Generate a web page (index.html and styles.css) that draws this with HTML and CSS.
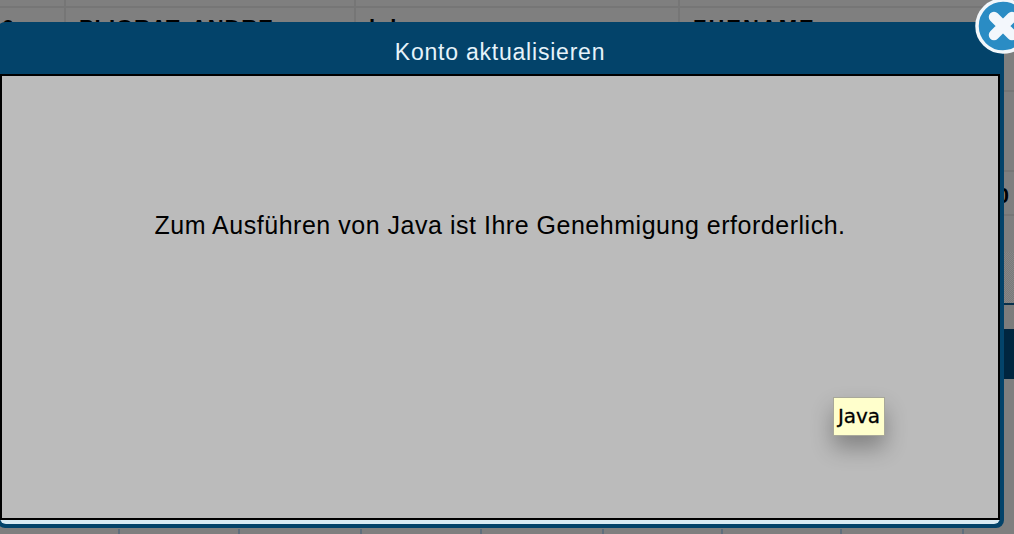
FILE: index.html
```html
<!DOCTYPE html>
<html lang="de">
<head>
<meta charset="utf-8">
<title>Konto aktualisieren</title>
<link rel="stylesheet" href="styles.css">
</head>
<body>
<div class="page">
  <div class="row row-top">
    <div class="cell cell-a"></div><div class="cell cell-b"></div><div class="cell cell-c"></div><div class="cell cell-d"></div>
  </div>
  <div class="row row-head">
    <div class="cell cell-a">0</div><div class="cell cell-b">PLIGRAT, ANDRE</div><div class="cell cell-c">lok</div><div class="cell cell-d">ZHENAME</div>
  </div>
  <div class="row row-plain"></div>
  <div class="row row-num"><span class="digit">0</span></div>
  <div class="row row-gap"></div>
  <div class="row row-band"></div>
  <div class="row row-light"></div>
  <div class="row row-dark"></div>
  <div class="row row-rest"></div>
  <div class="row row-ticks">
    <div class="tick"></div><div class="tick"></div><div class="tick"></div><div class="tick"></div><div class="tick"></div><div class="tick"></div><div class="tick"></div><div class="tick"></div>
  </div>
</div>

<div class="modal">
  <h1 class="modal-title">Konto aktualisieren</h1>
  <div class="modal-frame">
    <div class="applet">
      <p class="applet-msg">Zum Ausführen von Java ist Ihre Genehmigung erforderlich.</p>
      <div class="java-tip">Java</div>
    </div>
  </div>
</div>

<svg class="close" width="56" height="56" viewBox="0 0 56 56" aria-label="Schließen">
  <circle cx="28" cy="28" r="26" fill="#2a8cc4" stroke="#f2f7fb" stroke-width="3.5"/>
  <path d="M19 19 L37 37 M37 19 L19 37" stroke="#f3f7fc" stroke-width="10.5" stroke-linecap="round" fill="none"/>
</svg>
</body>
</html>
```

FILE: styles.css
```css
html, body {
  margin: 0;
  height: 534px;
  overflow: hidden;
  background: #7f7f7f;
}

.page {
  width: 1014px;
  height: 534px;
  display: flex;
  flex-direction: column;
  font-family: "Liberation Sans", Arial, sans-serif;
  color: #000;
}

.row {
  flex: none;
  box-sizing: border-box;
  border-bottom: 2px solid #767676;
}

.row-top, .row-head {
  display: grid;
  grid-template-columns: 66px 290px 324px 1fr;
}

.row-top { height: 8px; }
.row-head { height: 84px; }

.cell {
  box-sizing: border-box;
  border-right: 2px solid #767676;
  padding: 8px 0 0 13px;
  font-size: 22px;
  font-weight: 700;
  letter-spacing: 0.9px;
  line-height: 24px;
  white-space: nowrap;
}

.cell-a { padding-left: 2px; }
.cell-d { border-right: 0; letter-spacing: 2px; }

.row-plain { height: 80px; }

.row-num {
  height: 44px;
  display: flex;
  justify-content: flex-end;
  align-items: flex-start;
  padding-top: 12px;
}

.digit {
  font-size: 22px;
  font-weight: 700;
  line-height: 24px;
  margin-right: 5px;
}

.row-gap { height: 36px; border-bottom: 0; }

.row-band {
  height: 51px;
  border-bottom: 0;
  background: repeating-conic-gradient(#7a7a7a 0 25%, #868686 0 50%) 0 0 / 2px 2px;
}

.row-light {
  height: 26px;
  border-bottom: 0;
  border-top: 2px solid #06304c;
  background: #7c7c7c;
}

.row-dark { height: 50px; border-bottom: 0; background: #00253f; }
.row-rest { height: 150px; border-bottom: 0; }

.row-ticks {
  height: 6px;
  border-bottom: 0;
  display: grid;
  grid-template-columns: 120px 120px 122px 120px 122px 119px 119px 122px;
}

.tick { border-right: 2px solid #5f6f7d; }

.modal {
  position: absolute;
  left: -3px;
  top: 22px;
  width: 1007px;
  height: 506px;
  box-sizing: border-box;
  display: flex;
  flex-direction: column;
  background: #03436a;
  border-radius: 8px;
  padding: 0 4px 4px 3px;
}

.modal-title {
  flex: none;
  height: 52px;
  margin: 0;
  font: 400 23px/61px "Liberation Sans", Arial, sans-serif;
  letter-spacing: 0.78px;
  color: #e6f3fa;
  text-align: center;
  box-sizing: border-box;
}

.modal-frame {
  flex: 1;
  min-height: 0;
  display: flex;
  background: #d9ebf4;
  padding-bottom: 4px;
  border-radius: 0 0 6px 6px;
}

.applet {
  position: relative;
  flex: 1;
  border: 2px solid #000;
  background: #bbbbbb;
  display: flex;
  justify-content: center;
}

.applet-msg {
  margin: 133px 0 0;
  font: 400 25px/32px "Liberation Sans", Arial, sans-serif;
  letter-spacing: 0.52px;
  color: #000;
}

.java-tip {
  position: absolute;
  left: 831px;
  top: 321px;
  width: 52px;
  height: 39px;
  box-sizing: border-box;
  background: #ffffcc;
  border: 1px solid #a8a89a;
  font: 400 20px/37px "DejaVu Sans", sans-serif;
  -webkit-text-stroke: 0.3px #000;
  text-align: center;
  color: #000;
  box-shadow: 0 12px 22px rgba(0, 0, 0, 0.3);
}

.close {
  position: absolute;
  left: 975px;
  top: -2px;
}
```
